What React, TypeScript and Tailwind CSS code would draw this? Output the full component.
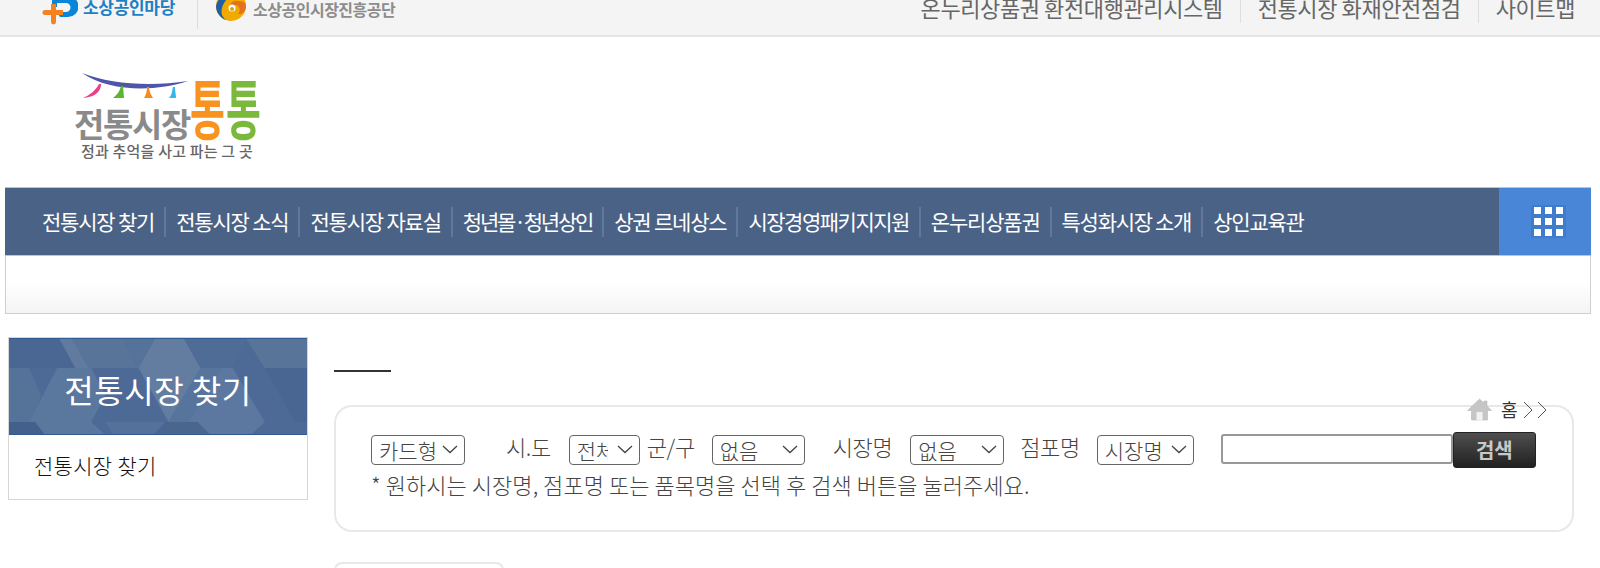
const FONT = "font-['Noto_Sans_CJK_KR','Noto_Sans',sans-serif]";

const navItems = [
  { label: '전통시장 찾기', tracking: 'tracking-[-1.2px]' },
  { label: '전통시장 소식', tracking: 'tracking-[-1.2px]' },
  { label: '전통시장 자료실', tracking: 'tracking-[-1.2px]' },
  { label: '청년몰·청년상인', tracking: 'tracking-[-2.2px]' },
  { label: '상권 르네상스', tracking: 'tracking-[-1.2px]' },
  { label: '시장경영패키지지원', tracking: 'tracking-[-1.5px]' },
  { label: '온누리상품권', tracking: 'tracking-[-1.2px]' },
  { label: '특성화시장 소개', tracking: 'tracking-[-1.3px]' },
  { label: '상인교육관', tracking: 'tracking-[-1.2px]' },
];

const topLinks = ['온누리상품권 환전대행관리시스템', '전통시장 화재안전점검', '사이트맵'];

function MadangIcon() {
  return (
    <svg width="36" height="26" viewBox="0 0 36 26" className="shrink-0">
      <path d="M10 -4h16a9 9 0 0 1 0 21h-8l-3-5h9a4 4 0 0 0 0-9h-9v4h-5z" fill="#0a86d8" />
      <path d="M9 4h5v6h7v5h-7v7a2.5 2.5 0 0 1-5 0v-7H3a2.5 2.5 0 0 1 0-5h6z" fill="#f58220" />
    </svg>
  );
}

function AgencyIcon() {
  return (
    <svg width="31" height="22" viewBox="0 0 31 22" className="shrink-0">
      <circle cx="15" cy="6" r="15" fill="#f2a900" />
      <path d="M0 6a15 15 0 0 0 15 15c-7 0-11-6-9-13s6-10 9-14a15 15 0 0 0-15 12z" fill="#1f5fa8" />
      <path d="M30 6c0 5-4 9-8 8 3-3 2-8-2-9-3 0-6 2-5 6-3-3-1-9 4-10 5 0 11 0 11 5z" fill="#e5711d" />
      <circle cx="16" cy="8" r="3.5" fill="#ffffff" />
      <circle cx="16" cy="9" r="2" fill="#d9a21a" />
    </svg>
  );
}

function Logo() {
  return (
    <svg width="200" height="100" viewBox="0 0 200 100" className="block">
      <path d="M12 2C40 13 80 16 118 10 85 21 40 21 12 2z" fill="#4f55a8" />
      <path d="M29 13h2c0 6-4 13-18 14 7-3 13-8 16-14z" fill="#ec3f84" />
      <path d="M51 15h2l1 12H43c4-3 7-7 8-12z" fill="#5cb531" />
      <path d="M77 16h2c0 4 2 8 4 11h-9c2-3 3-7 3-11z" fill="#f58a1f" />
      <path d="M103 16h2c0 4 1 8 1 11h-7c3-3 3-7 4-11z" fill="#35b6ee" />
      <text x="4" y="66" fontSize="33" fontWeight="700" fill="#8a8a8a" letterSpacing="-1.4">전통시장</text>
      <g transform="translate(120 63) scale(1 1.7)">
        <text x="0" y="0" fontSize="38" fontWeight="700" fill="#f7931e">통</text>
      </g>
      <g transform="translate(156 63) scale(1 1.7)">
        <text x="0" y="0" fontSize="38" fontWeight="700" fill="#7ab93b">통</text>
      </g>
      <text x="11" y="86" fontSize="15" fontWeight="500" fill="#666666" letterSpacing="0.2">정과 추억을 사고 파는 그 곳</text>
    </svg>
  );
}

function AppsIcon() {
  return (
    <div className="grid grid-cols-3 gap-[4px] bg-[#3f7ccb] px-[3px] py-[2px]">
      {Array.from({ length: 9 }, (_, i) => (
        <span key={i} className="h-[7px] w-[7px] bg-white" />
      ))}
    </div>
  );
}

function HeaderPattern() {
  return (
    <svg className="absolute inset-0 h-full w-full" viewBox="0 0 297 97" preserveAspectRatio="none">
      <rect width="297" height="97" fill="#4d6a97" />
      <path d="M0 0h50l16 30H0z" fill="#4a6794" />
      <path d="M50 0h63l16 30H66z" fill="#587599" />
      <path d="M50 0h12l17 30H66z" fill="#607b9f" />
      <path d="M113 0h33l-17 30z" fill="#557399" />
      <path d="M146 0h28l17 30-32 54-30-54z" fill="#637da1" />
      <path d="M174 0h62l-14 30h-31z" fill="#4f6c97" />
      <path d="M236 0h61v30h-42z" fill="#587599" />
      <path d="M191 30h32l-34 54h-30z" fill="#56749c" />
      <path d="M223 30l32 54-14 13h-49l-13-13 34-54z" fill="#5d78a0" />
      <path d="M255 30h42v54h-12z" fill="#496692" />
      <path d="M0 30h20l12 27-8 27H0z" fill="#557399" />
      <path d="M48 30 20 84l14 13h62l-14-13 14-27-14-27z" fill="#5a779e" />
      <path d="M0 84h26L36 97H0z" fill="#435f8c" />
      <path d="M96 84h60l-12 13H104z" fill="#54719c" />
      <path d="M156 84h32l13 13h-57z" fill="#49668f" />
      <path d="M0 0h297v1H0zM0 96h297v1H0z" fill="#2f5a92" />
    </svg>
  );
}

function Sel({ width, value, padding }: { width: string; value: string; padding: string }) {
  return (
    <div className={`relative h-[30px] ${width}`}>
      <select
        defaultValue={value}
        className={`h-full w-full appearance-none rounded-[4px] border border-[#666] bg-white pl-[7px] text-[21px] leading-[26px] tracking-normal text-[#444] ${padding}`}
      >
        <option>{value}</option>
      </select>
      <svg width="16" height="9" viewBox="0 0 16 9" fill="none" stroke="#444" strokeWidth="1.3" className="pointer-events-none absolute right-[7px] top-[12px]">
        <path d="M1 1l7 6.5L15 1" />
      </svg>
    </div>
  );
}

export default function App() {
  return (
    <div className={`relative h-[568px] w-[1600px] overflow-hidden bg-white ${FONT}`}>
      {/* Top bar, scrolled slightly off the page */}
      <div className="flex h-[37px] items-start justify-between overflow-hidden border-b-2 border-[#e6e6e6] bg-[#f4f4f4]">
        <div className="flex items-start pl-[42px]">
          <MadangIcon />
          <span className="-mt-[5px] ml-[5px] text-[17px] font-bold leading-[24px] tracking-[-0.3px] text-[#1f7fc4]">소상공인마당</span>
          <span className="ml-[22px] h-[29px] w-px bg-[#dcdcdc]" />
          <span className="ml-[18px]"><AgencyIcon /></span>
          <span className="ml-[6px] -mt-[3px] text-[16px] font-bold leading-[24px] tracking-[-0.5px] text-[#8c8c8c]">소상공인시장진흥공단</span>
        </div>
        <div className="flex items-start pr-[25px]">
          {topLinks.map((link, i) => (
            <div key={link} className="flex items-start">
              {i > 0 && <span className="mx-[17px] h-[23px] w-px bg-[#dedede]" />}
              <span className="-mt-[6px] text-[22px] leading-[26px] tracking-[-0.4px] text-[#666]">{link}</span>
            </div>
          ))}
        </div>
      </div>

      {/* Logo */}
      <div className="h-[150px] pl-[70px] pt-[34px]">
        <Logo />
      </div>

      {/* Main nav */}
      <div className="ml-[5px] w-[1586px] border-x border-b border-[#cfcfcf] bg-gradient-to-b from-white from-75% to-[#f4f4f4] pb-[57px]">
        <div className="-mx-px flex h-[69px] items-center justify-between border-y border-[#b9c4d4] bg-[#4a6285] pl-[37px]">
          <div className="flex items-center">
            {navItems.map((item, i) => (
              <div key={item.label} className="flex items-center">
                {i > 0 && <span className="mx-[10px] h-[30px] w-[2px] bg-[#62789a]" />}
                <span className={`-mt-[1px] text-[21px] leading-[30px] text-white ${item.tracking}`}>{item.label}</span>
              </div>
            ))}
          </div>
          <div className="flex h-[67px] w-[92px] items-center justify-center bg-[#4a86d8] pl-[7px]">
            <AppsIcon />
          </div>
        </div>
      </div>

      {/* Content */}
      <div className="mt-[23px] flex items-start">
        <aside className="ml-[8px] w-[300px] border border-[#d6d6d6]">
          <div className="relative flex h-[97px] items-center justify-center pt-[5px]">
            <HeaderPattern />
            <h2 className="relative text-[32px] font-normal tracking-[0.5px] text-white">전통시장 찾기</h2>
          </div>
          <div className="flex h-[64px] items-center pb-[3px] pl-[25px] text-[21px] font-light tracking-[0.3px] text-[#111]">전통시장 찾기</div>
        </aside>

        <main className="relative ml-[26px] w-[1240px]">
          <div className="mt-[33px] h-[2px] w-[57px] bg-[#333]" />

          <div className="mt-[33px] h-[127px] rounded-[18px] border-2 border-[#e8e8e8] pl-[35px] pt-[26px]">
            <div className="flex h-[30px] items-center text-[22px] font-light tracking-[-0.4px] text-[#444]">
              <Sel width="w-[94px]" value="카드형" padding="pr-[26px]" />
              <span className="mb-[4px] ml-[41px]">시.도</span>
              <span className="ml-[18px]"><Sel width="w-[71px]" value="전체" padding="pr-[31px]" /></span>
              <span className="mb-[4px] ml-[7px]">군/구</span>
              <span className="ml-[17px]"><Sel width="w-[93px]" value="없음" padding="pr-[26px]" /></span>
              <span className="mb-[4px] ml-[28px]">시장명</span>
              <span className="ml-[18px]"><Sel width="w-[94px]" value="없음" padding="pr-[26px]" /></span>
              <span className="mb-[4px] ml-[16px]">점포명</span>
              <span className="ml-[17px]"><Sel width="w-[97px]" value="시장명" padding="pr-[26px]" /></span>
              <input className="ml-[27px] mt-[1px] h-[30px] w-[232px] rounded-[3px] border-2 border-[#989898] bg-white" />
              <button className="mt-[3px] h-[36px] w-[83px] shrink-0 rounded-[3px] border border-[#222] bg-gradient-to-b from-[#4f4f4f] to-[#222] text-[20px] font-bold tracking-normal text-[#c8c8c8]">검색</button>
            </div>
            <p className="mt-[6px] text-[22px] font-light leading-[30px] tracking-[0.05px] text-[#444]">* 원하시는 시장명, 점포명 또는 품목명을 선택 후 검색 버튼을 눌러주세요.</p>
          </div>

          {/* Breadcrumb overlapping the search box */}
          <div className="absolute left-[1133px] top-[59px] flex items-center text-[18px] text-[#333]">
            <svg width="25" height="23" viewBox="0 0 25 23">
              <path d="M12.5 1 .5 12.5h4V22h16v-9.500h4L20 8V3h-3v2z" fill="#c6c6c6" stroke="#b0b0b0" strokeWidth="0.5" />
              <path d="M9.500 22v-8h6v8z" fill="#f2f2f2" />
            </svg>
            <span className="ml-[9px]">홈</span>
            <svg width="28" height="20" viewBox="0 0 28 20" className="ml-[4px]" fill="none" stroke="#555" strokeWidth="1">
              <path d="M2 2 10 10 2 18M16 2 24 10 16 18" />
            </svg>
          </div>

          <div className="mt-[30px] h-[40px] w-[170px] rounded-t-[8px] border-2 border-[#e8e8e8]" />
        </main>
      </div>
    </div>
  );
}
